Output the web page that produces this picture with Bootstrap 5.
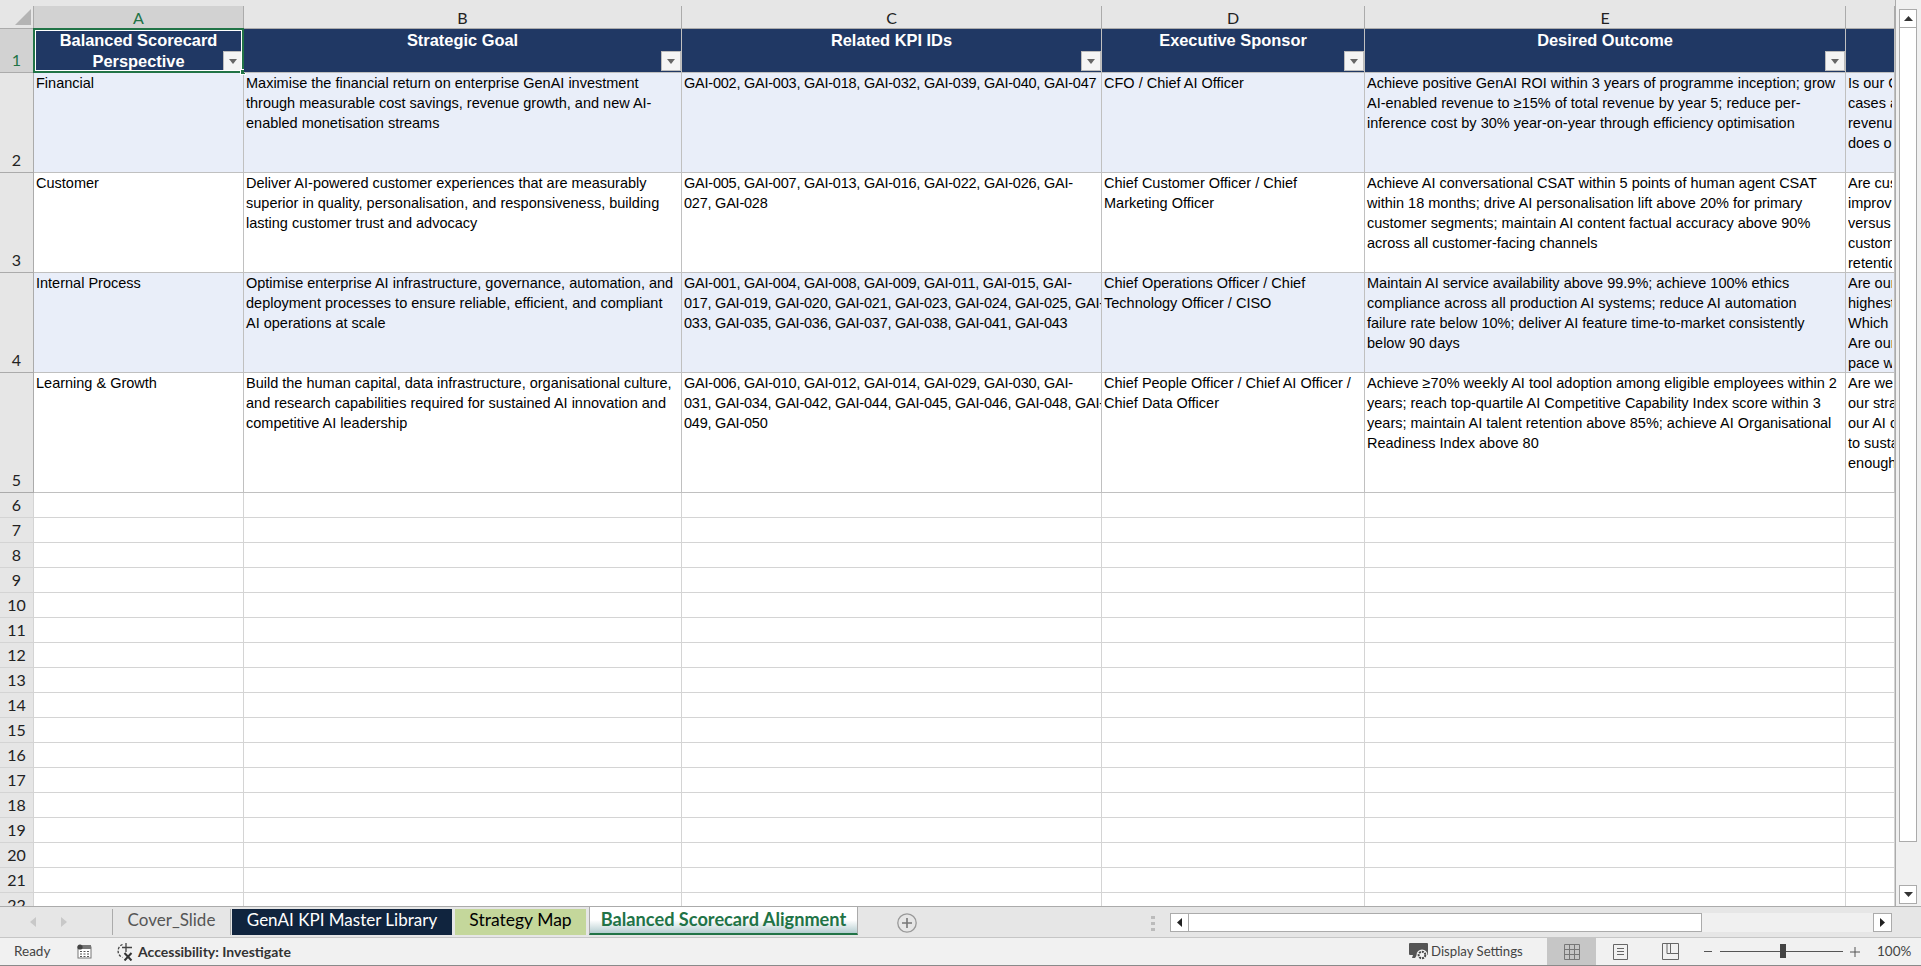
<!doctype html>
<html lang="en">
<head>
<meta charset="utf-8">
<title>Balanced Scorecard Alignment</title>
<link href="https://cdn.jsdelivr.net/npm/bootstrap@5.3.0/dist/css/bootstrap.min.css" rel="stylesheet">
<style>
html,body{height:966px;overflow:hidden;background:#e6e6e6;font-family:"Liberation Sans",Arial,sans-serif}
.xl-app{width:1921px;height:966px}
.xl-work{height:906px;overflow:hidden}
.xl-gridwrap{width:1895px;overflow:hidden;background:#fff;flex:none}
.xl-scroll{width:26px;flex:none;background:#f0f0f0;border-left:1px solid #ababab;padding:9px 4px 2px 3px}
.xl-sbtn{height:19px;background:#fff;border:1px solid #ababab;display:flex;align-items:center;justify-content:center;flex:none}
.xl-thumb{height:814px;background:#fff;border:1px solid #ababab;border-top:0;flex:none}
.xl-sheet{table-layout:fixed;width:1895px;border-collapse:separate;border-spacing:0;font-size:14.5px;color:#000;margin:0}
.xl-c0{width:34px}.xl-c1{width:210px}.xl-c2{width:438px}.xl-c3{width:420px}.xl-c4{width:263px}.xl-c5{width:481px}.xl-c6{width:49px}
.xl-sheet td,.xl-sheet th{padding:0;border:0;border-right:1px solid #c0c0c0;border-bottom:1px solid #c0c0c0;overflow:hidden;white-space:nowrap;vertical-align:top;line-height:20px}
.xl-sheet td{padding:0 2px;background:#fff}
.xl-sheet tr.xl-band td{background:#e9eef9}
.xl-sheet tbody tr{height:100px}
.xl-sheet tbody tr.xl-r5{height:120px}
.xl-sheet tbody tr.xl-e{height:25px}
.xl-sheet tbody tr.xl-hr{height:43px}
.xl-sheet tbody tr.xl-e td{border-bottom-color:#d4d4d4;border-right-color:#d4d4d4}
.xl-clip{height:99px;overflow:hidden}
.xl-kpi{letter-spacing:-.23px}
.xl-sheet thead .xl-cols th{height:29px;background:#e6e6e6;font-family:Lato,sans-serif;font-weight:400;font-size:16px;text-align:center;vertical-align:top;padding:6px 0 0;border-right:0;border-bottom:1px solid #ababab;color:#222}
.xl-cl{height:22px;line-height:23px;border-right:1px solid #ababab}
.xl-sheet thead .xl-cols th .xl-cl.xl-cur{background:#d2d2d2;color:#217346}
.xl-sheet thead .xl-cols th.xl-corner{position:relative;padding:0}
.xl-corner svg{position:absolute;right:3px;bottom:3px}
.xl-corner .xl-cl{height:28px;margin-top:0;position:relative}
.xl-corner .xl-cl::before{content:"";position:absolute;left:0;right:-1px;top:0;height:6px;background:#e6e6e6}
.xl-sheet td.xl-rowh{background:#e6e6e6;font-family:Lato,sans-serif;font-size:16px;text-align:center;vertical-align:bottom;padding:0;border-right:1px solid #ababab;border-bottom:1px solid #ababab;line-height:24px;color:#222}
.xl-sheet tr.xl-band td.xl-rowh{background:#e6e6e6}
.xl-sheet td.xl-rowh.xl-cur{background:#d2d2d2;color:#217346}
.xl-sheet td.xl-hd{background:#203864;color:#fff;font-weight:700;font-size:16.4px;text-align:center;line-height:21px;height:43px;position:relative;padding:0;white-space:normal}
.xl-sheet td.xl-first{overflow:visible}
.xl-htext{display:block;padding-top:1px}
.xl-filter{position:absolute;right:0;bottom:1px;width:20px;height:20px;background:#f4f4f4;border:1px solid #bbb;display:flex;align-items:center;justify-content:center}
.xl-sel{position:absolute;left:-1px;top:-1px;right:-1px;bottom:-1px;border:2px solid #217346;box-shadow:inset 0 0 0 1px #fff;pointer-events:none}
.xl-handle{position:absolute;right:-3px;bottom:-3px;width:6px;height:6px;background:#217346;border:1px solid #fff}
.xl-tabs{height:32px;background:#e6e6e6;border-top:1px solid #ababab;border-bottom:1px solid #c6c6c6;flex:none}
.xl-tabnav{width:112px;padding-left:30px;gap:25px;height:30px;flex:none}
.xl-tabrow{height:28px;align-items:flex-end;flex:none}
.xl-tab{font-family:Lato,sans-serif;font-size:17px;height:26px;line-height:21px;white-space:nowrap;text-align:center;flex:none}
.xl-t1{color:#555;width:119px;border-left:1px solid #ababab;border-right:1px solid #ababab}
.xl-t2{background:#10243e;color:#fff;width:220px;margin-left:1px}
.xl-t3{background:#c4d79b;color:#000;width:131px;margin-left:3px;font-size:17.5px}
.xl-t4{color:#217346;font-weight:700;font-size:18.2px;width:269px;margin-left:3px;background:linear-gradient(#fff 50%,#b5cdd0);border:1px solid #ababab;border-top:0;border-bottom:2px solid #217346;height:28px;line-height:24px}
.xl-add{width:20px;height:20px;flex:none;margin:6px 0 0 39px;display:flex;align-items:center;justify-content:center}
.xl-dots{width:4px;height:15px;margin:9px 0 0 234px;flex:none;background:repeating-linear-gradient(#bbb 0 3px,transparent 3px 6px)}
.xl-hscroll{margin:6px 0 0 15px;width:722px;height:19px;display:flex;background:#f0f0f0;flex:none}
.xl-hbtn{width:19px;height:19px;background:#fff;border:1px solid #ababab;display:flex;align-items:center;justify-content:center;flex:none}
.xl-hthumb{width:513px;background:#fff;border:1px solid #ababab;border-left:0;flex:none}
.xl-status{height:28px;background:#f1f1f1;border-bottom:1px solid #8a8a8a;font-family:Lato,sans-serif;font-size:13.5px;color:#444;flex:none}
.xl-ready{margin-left:14px;width:36px;white-space:nowrap}
.xl-ical{margin-left:27px;flex:none}
.xl-iacc{margin-left:25px;flex:none}
.xl-acc{margin-left:3px;font-weight:700;font-size:14px;color:#333;white-space:nowrap}
.xl-right{margin-left:auto;width:512px;height:27px;flex:none}
.xl-dtext{margin-left:3px;width:116px;white-space:nowrap;font-size:13.2px}
.xl-vbtn{height:27px;display:flex;align-items:center;justify-content:center;flex:none}
.xl-v1{width:49px;background:#c6c6c6}
.xl-v2{width:49px}
.xl-v3{width:51px}
.xl-minus{margin-left:8px;width:8px;height:1px;background:#555;flex:none}
.xl-track{margin-left:8px;width:123px;height:1px;background:#555;position:relative;flex:none}
.xl-knob{position:absolute;left:60px;top:-7px;width:6px;height:14px;background:#444}
.xl-plus{margin-left:7px;flex:none}
.xl-pct{margin-left:17px;width:31px;white-space:nowrap;flex:none}
</style>
</head>
<body>
<div class="xl-app d-flex flex-column">
  <div class="xl-work d-flex">
    <div class="xl-gridwrap">
      <table class="xl-sheet">
        <colgroup><col class="xl-c0"><col class="xl-c1"><col class="xl-c2"><col class="xl-c3"><col class="xl-c4"><col class="xl-c5"><col class="xl-c6"></colgroup>
        <thead>
          <tr class="xl-cols"><th class="xl-corner"><div class="xl-cl"></div><svg width="16" height="16" viewBox="0 0 16 16"><path d="M16 0V16H0Z" fill="#b4b4b4"/></svg></th><th><div class="xl-cl xl-cur">A</div></th><th><div class="xl-cl">B</div></th><th><div class="xl-cl">C</div></th><th><div class="xl-cl">D</div></th><th><div class="xl-cl">E</div></th><th><div class="xl-cl"></div></th></tr>
        </thead>
        <tbody>
          <tr class="xl-hr"><td class="xl-rowh xl-cur">1</td>
            <td class="xl-hd xl-first"><span class="xl-htext">Balanced Scorecard<br>Perspective</span><span class="xl-filter"><svg width="8" height="5" viewBox="0 0 8 5"><path d="M0 0H8L4 5Z" fill="#666"/></svg></span><span class="xl-sel"></span><span class="xl-handle"></span></td>
            <td class="xl-hd"><span class="xl-htext">Strategic Goal</span><span class="xl-filter"><svg width="8" height="5" viewBox="0 0 8 5"><path d="M0 0H8L4 5Z" fill="#666"/></svg></span></td>
            <td class="xl-hd"><span class="xl-htext">Related KPI IDs</span><span class="xl-filter"><svg width="8" height="5" viewBox="0 0 8 5"><path d="M0 0H8L4 5Z" fill="#666"/></svg></span></td>
            <td class="xl-hd"><span class="xl-htext">Executive Sponsor</span><span class="xl-filter"><svg width="8" height="5" viewBox="0 0 8 5"><path d="M0 0H8L4 5Z" fill="#666"/></svg></span></td>
            <td class="xl-hd"><span class="xl-htext">Desired Outcome</span><span class="xl-filter"><svg width="8" height="5" viewBox="0 0 8 5"><path d="M0 0H8L4 5Z" fill="#666"/></svg></span></td>
            <td class="xl-hd"></td>
          </tr>
          <tr class="xl-band"><td class="xl-rowh">2</td><td>Financial</td>
            <td>Maximise the financial return on enterprise GenAI investment<br>through measurable cost savings, revenue growth, and new AI-<br>enabled monetisation streams</td>
            <td class="xl-kpi">GAI-002, GAI-003, GAI-018, GAI-032, GAI-039, GAI-040, GAI-047</td>
            <td>CFO / Chief AI Officer</td>
            <td>Achieve positive GenAI ROI within 3 years of programme inception; grow<br>AI-enabled revenue to ≥15% of total revenue by year 5; reduce per-<br>inference cost by 30% year-on-year through efficiency optimisation</td>
            <td><div class="xl-clip">Is our GenAI<br>cases actually<br>revenue growth<br>does our</div></td></tr>
          <tr><td class="xl-rowh">3</td><td>Customer</td>
            <td>Deliver AI-powered customer experiences that are measurably<br>superior in quality, personalisation, and responsiveness, building<br>lasting customer trust and advocacy</td>
            <td class="xl-kpi">GAI-005, GAI-007, GAI-013, GAI-016, GAI-022, GAI-026, GAI-<br>027, GAI-028</td>
            <td>Chief Customer Officer / Chief<br>Marketing Officer</td>
            <td>Achieve AI conversational CSAT within 5 points of human agent CSAT<br>within 18 months; drive AI personalisation lift above 20% for primary<br>customer segments; maintain AI content factual accuracy above 90%<br>across all customer-facing channels</td>
            <td><div class="xl-clip">Are customers<br>improving<br>versus<br>customer<br>retention</div></td></tr>
          <tr class="xl-band"><td class="xl-rowh">4</td><td>Internal Process</td>
            <td>Optimise enterprise AI infrastructure, governance, automation, and<br>deployment processes to ensure reliable, efficient, and compliant<br>AI operations at scale</td>
            <td class="xl-kpi">GAI-001, GAI-004, GAI-008, GAI-009, GAI-011, GAI-015, GAI-<br>017, GAI-019, GAI-020, GAI-021, GAI-023, GAI-024, GAI-025, GAI-<br>033, GAI-035, GAI-036, GAI-037, GAI-038, GAI-041, GAI-043</td>
            <td>Chief Operations Officer / Chief<br>Technology Officer / CISO</td>
            <td>Maintain AI service availability above 99.9%; achieve 100% ethics<br>compliance across all production AI systems; reduce AI automation<br>failure rate below 10%; deliver AI feature time-to-market consistently<br>below 90 days</td>
            <td><div class="xl-clip">Are our AI<br>highest<br>Which<br>Are our<br>pace with</div></td></tr>
          <tr class="xl-r5"><td class="xl-rowh">5</td><td>Learning &amp; Growth</td>
            <td>Build the human capital, data infrastructure, organisational culture,<br>and research capabilities required for sustained AI innovation and<br>competitive AI leadership</td>
            <td class="xl-kpi">GAI-006, GAI-010, GAI-012, GAI-014, GAI-029, GAI-030, GAI-<br>031, GAI-034, GAI-042, GAI-044, GAI-045, GAI-046, GAI-048, GAI-<br>049, GAI-050</td>
            <td>Chief People Officer / Chief AI Officer /<br>Chief Data Officer</td>
            <td>Achieve ≥70% weekly AI tool adoption among eligible employees within 2<br>years; reach top-quartile AI Competitive Capability Index score within 3<br>years; maintain AI talent retention above 85%; achieve AI Organisational<br>Readiness Index above 80</td>
            <td>Are we<br>our strategy<br>our AI capabilities<br>to sustain<br>enough</td></tr>
          <tr class="xl-e"><td class="xl-rowh">6</td><td></td><td></td><td></td><td></td><td></td><td></td></tr>
          <tr class="xl-e"><td class="xl-rowh">7</td><td></td><td></td><td></td><td></td><td></td><td></td></tr>
          <tr class="xl-e"><td class="xl-rowh">8</td><td></td><td></td><td></td><td></td><td></td><td></td></tr>
          <tr class="xl-e"><td class="xl-rowh">9</td><td></td><td></td><td></td><td></td><td></td><td></td></tr>
          <tr class="xl-e"><td class="xl-rowh">10</td><td></td><td></td><td></td><td></td><td></td><td></td></tr>
          <tr class="xl-e"><td class="xl-rowh">11</td><td></td><td></td><td></td><td></td><td></td><td></td></tr>
          <tr class="xl-e"><td class="xl-rowh">12</td><td></td><td></td><td></td><td></td><td></td><td></td></tr>
          <tr class="xl-e"><td class="xl-rowh">13</td><td></td><td></td><td></td><td></td><td></td><td></td></tr>
          <tr class="xl-e"><td class="xl-rowh">14</td><td></td><td></td><td></td><td></td><td></td><td></td></tr>
          <tr class="xl-e"><td class="xl-rowh">15</td><td></td><td></td><td></td><td></td><td></td><td></td></tr>
          <tr class="xl-e"><td class="xl-rowh">16</td><td></td><td></td><td></td><td></td><td></td><td></td></tr>
          <tr class="xl-e"><td class="xl-rowh">17</td><td></td><td></td><td></td><td></td><td></td><td></td></tr>
          <tr class="xl-e"><td class="xl-rowh">18</td><td></td><td></td><td></td><td></td><td></td><td></td></tr>
          <tr class="xl-e"><td class="xl-rowh">19</td><td></td><td></td><td></td><td></td><td></td><td></td></tr>
          <tr class="xl-e"><td class="xl-rowh">20</td><td></td><td></td><td></td><td></td><td></td><td></td></tr>
          <tr class="xl-e"><td class="xl-rowh">21</td><td></td><td></td><td></td><td></td><td></td><td></td></tr>
          <tr class="xl-e"><td class="xl-rowh">22</td><td></td><td></td><td></td><td></td><td></td><td></td></tr>
        </tbody>
      </table>
    </div>
    <div class="xl-scroll d-flex flex-column">
      <div class="xl-sbtn"><svg width="9" height="5" viewBox="0 0 9 5"><path d="M4.500 0L9 5H0Z" fill="#333"/></svg></div>
      <div class="xl-thumb"></div>
      <div class="flex-grow-1"></div>
      <div class="xl-sbtn"><svg width="9" height="5" viewBox="0 0 9 5"><path d="M0 0H9L4.500 5Z" fill="#333"/></svg></div>
    </div>
  </div>
  <div class="xl-tabs d-flex">
    <div class="xl-tabnav d-flex align-items-center"><svg width="6" height="10" viewBox="0 0 6 10"><path d="M6 0V10L0 5Z" fill="#c8c8c8"/></svg><svg width="6" height="10" viewBox="0 0 6 10"><path d="M0 0V10L6 5Z" fill="#c8c8c8"/></svg></div>
    <div class="xl-tabrow d-flex">
      <div class="xl-tab xl-t1">Cover_Slide</div>
      <div class="xl-tab xl-t2">GenAI KPI Master Library</div>
      <div class="xl-tab xl-t3">Strategy Map</div>
      <div class="xl-tab xl-t4">Balanced Scorecard Alignment</div>
    </div>
    <div class="xl-add"><svg width="20" height="20" viewBox="0 0 20 20"><circle cx="10" cy="10" r="9.200" fill="none" stroke="#999" stroke-width="1.300"/><path d="M10 5v10M5 10h10" stroke="#777" stroke-width="1.600"/></svg></div>
    <div class="xl-dots"></div>
    <div class="xl-hscroll">
      <div class="xl-hbtn"><svg width="5" height="9" viewBox="0 0 5 9"><path d="M5 0V9L0 4.500Z" fill="#222"/></svg></div>
      <div class="xl-hthumb"></div>
      <div class="flex-grow-1"></div>
      <div class="xl-hbtn"><svg width="5" height="9" viewBox="0 0 5 9"><path d="M0 0V9L5 4.500Z" fill="#222"/></svg></div>
    </div>
  </div>
  <div class="xl-status d-flex align-items-center">
    <span class="xl-ready">Ready</span>
    <svg class="xl-ical" width="15" height="15" viewBox="0 0 15 15"><rect x="1" y="3" width="13" height="11" fill="#fff" stroke="#777"/><rect x="5" y="1" width="9" height="4" fill="#777"/><circle cx="3" cy="3" r="2.600" fill="#444"/><path d="M3 7.500h2M6.500 7.500h2M10 7.500h2M3 10h2M6.500 10h2M10 10h2M3 12.500h2M6.500 12.500h2M10 12.500h2" stroke="#555"/></svg>
    <svg class="xl-iacc" width="18" height="19" viewBox="0 0 18 19"><path d="M5.500 2.500A7 7 0 0 0 5.500 15.500" fill="none" stroke="#444" stroke-width="1.300" stroke-dasharray="2.500 1.500"/><path d="M9 1v9M5 5.500h10" stroke="#444" stroke-width="1.300"/><path d="M7.500 11l7 7.500M14.500 11l-7 7.500" stroke="#333" stroke-width="2"/></svg>
    <span class="xl-acc">Accessibility: Investigate</span>
    <div class="xl-right d-flex align-items-center">
      <svg class="flex-none" width="19" height="18" viewBox="0 0 19 18"><path d="M1 0H18a1 1 0 0 1 1 1V12H1a1 1 0 0 1-1-1V1a1 1 0 0 1 1-1Z" fill="#555"/><path d="M4 12h4l-2 3H3Z" fill="#555"/><circle cx="13" cy="12" r="5.500" fill="#f1f1f1"/><circle cx="13" cy="12" r="3.300" fill="none" stroke="#444" stroke-width="2" stroke-dasharray="2 1"/></svg>
      <span class="xl-dtext">Display Settings</span>
      <div class="xl-vbtn xl-v1"><svg width="16" height="16" viewBox="0 0 16 16"><path d="M.5.500h15v15H.5zM5.500.500v15M10.500.500v15M.5 5.500h15M.5 10.500h15" fill="none" stroke="#777"/></svg></div>
      <div class="xl-vbtn xl-v2"><svg width="15" height="16" viewBox="0 0 15 16"><path d="M.5.500h14v15H.5z" fill="none" stroke="#666"/><path d="M4 4.500h7M4 7.500h7M4 10.500h7" stroke="#666"/></svg></div>
      <div class="xl-vbtn xl-v3"><svg width="17" height="17" viewBox="0 0 17 17"><path d="M.5.500h16v16H.5zM8.500.500v10h-3.500v-10M8.500 10.500h8" fill="none" stroke="#666"/></svg></div>
      <div class="xl-minus"></div>
      <div class="xl-track"><div class="xl-knob"></div></div>
      <svg class="xl-plus" width="10" height="10" viewBox="0 0 10 10"><path d="M5 0v10M0 5h10" stroke="#555"/></svg>
      <span class="xl-pct">100%</span>
    </div>
  </div>
</div>
<script src="https://cdn.jsdelivr.net/npm/bootstrap@5.3.0/dist/js/bootstrap.bundle.min.js"></script>
</body>
</html>
